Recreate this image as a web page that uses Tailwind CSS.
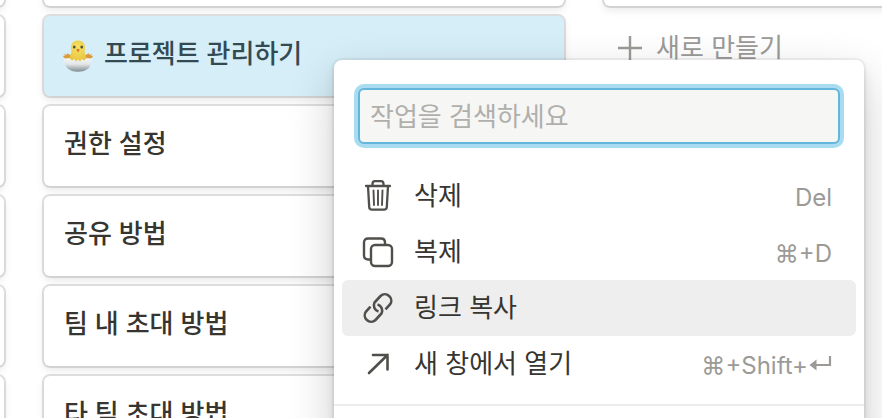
<!DOCTYPE html>
<html lang="ko">

<head>
    <meta charset="UTF-8">
    <meta name="viewport" content="width=device-width, initial-scale=1">
    <title>프로젝트 관리하기</title>
    <script src="https://cdn.jsdelivr.net/npm/@tailwindcss/browser@4"></script>
</head>

<body class="relative h-screen overflow-hidden bg-white font-['Inter','Noto_Sans_CJK_KR',sans-serif] text-[26px] leading-10 text-[#37352f]">
    <!-- Board -->
    <main class="-mt-[74px] -ml-[516px] flex items-start gap-10">
        <!-- Column 1 -->
        <div class="flex w-[520px] shrink-0 flex-col gap-2.5">
            <article class="h-20 rounded-md bg-white shadow-[0_0_0_2px_rgba(15,15,15,0.12),0_4px_8px_rgba(15,15,15,0.1)]"></article>
            <article class="h-20 rounded-md bg-white shadow-[0_0_0_2px_rgba(15,15,15,0.12),0_4px_8px_rgba(15,15,15,0.1)]"></article>
            <article class="h-20 rounded-md bg-white shadow-[0_0_0_2px_rgba(15,15,15,0.12),0_4px_8px_rgba(15,15,15,0.1)]"></article>
            <article class="h-20 rounded-md bg-white shadow-[0_0_0_2px_rgba(15,15,15,0.12),0_4px_8px_rgba(15,15,15,0.1)]"></article>
            <article class="h-20 rounded-md bg-white shadow-[0_0_0_2px_rgba(15,15,15,0.12),0_4px_8px_rgba(15,15,15,0.1)]"></article>
            <article class="h-20 rounded-md bg-white shadow-[0_0_0_2px_rgba(15,15,15,0.12),0_4px_8px_rgba(15,15,15,0.1)]"></article>
        </div>

        <!-- Column 2 -->
        <div class="flex w-[520px] shrink-0 flex-col gap-2.5 font-medium">
            <article class="h-20 rounded-md bg-white shadow-[0_0_0_2px_rgba(15,15,15,0.12),0_4px_8px_rgba(15,15,15,0.1)]"></article>
            <article class="flex h-20 items-start gap-2.5 rounded-md bg-[#d6eef8] px-[18px] pt-[18px] text-[#344a53] shadow-[0_0_0_2px_rgba(15,15,15,0.12),0_4px_8px_rgba(15,15,15,0.1)]">
                <svg class="mt-1.5 h-8 w-8" viewBox="0 0 32 32" aria-hidden="true">
                    <defs>
                        <linearGradient id="shell" x1="0" y1="0" x2="0" y2="1">
                            <stop offset="0" stop-color="#f6f7f6" />
                            <stop offset="0.45" stop-color="#e2e6e7" />
                            <stop offset="1" stop-color="#7f8a90" />
                        </linearGradient>
                        <radialGradient id="chick" cx="0.5" cy="0.35" r="0.7">
                            <stop offset="0" stop-color="#f7e264" />
                            <stop offset="1" stop-color="#e6c23e" />
                        </radialGradient>
                    </defs>
                    <path d="M10 20C6 20.500 2 19 .8 15.800L3 16 2 14 4.500 15 5 13.200C7 14.500 9 15 11 15Z" fill="#dc9b3a" />
                    <path d="M22 20C26 20.500 30 19 31.200 15.800L29 16 30 14 27.500 15 27 13.200C25 14.500 23 15 21 15Z" fill="#dc9b3a" />
                    <path d="M2 19C4 18.200 6 18.200 8 18L24 18C26 18.200 28 18.200 30 19C30 27 25 31.800 16 31.800S2 27 2 19Z" fill="url(#shell)" />
                    <path d="M9 7.500C9 3 12 .5 16 .5S23 3 23 7.500C23 10 22 11.500 23 13.500L24.500 18 22 20.500 20 19 18 21.500 16 19.500 14 21.500 12 19 10 20.500 7.500 18 9 13.500C10 11.500 9 10 9 7.500Z" fill="url(#chick)" />
                    <ellipse cx="12.300" cy="7" rx="1.300" ry="1.600" fill="#46503e" />
                    <ellipse cx="19.700" cy="7" rx="1.300" ry="1.600" fill="#46503e" />
                    <path d="M14.200 9.800 16 8.600 17.800 9.800 16 12.500Z" fill="#e0762c" />
                </svg>
                <span>프로젝트 관리하기</span>
            </article>
            <article class="h-20 rounded-md bg-white px-5 pt-[18px] shadow-[0_0_0_2px_rgba(15,15,15,0.12),0_4px_8px_rgba(15,15,15,0.1)]">권한 설정</article>
            <article class="h-20 rounded-md bg-white px-5 pt-[18px] shadow-[0_0_0_2px_rgba(15,15,15,0.12),0_4px_8px_rgba(15,15,15,0.1)]">공유 방법</article>
            <article class="h-20 rounded-md bg-white px-5 pt-[18px] shadow-[0_0_0_2px_rgba(15,15,15,0.12),0_4px_8px_rgba(15,15,15,0.1)]">팀 내 초대 방법</article>
            <article class="h-20 rounded-md bg-white px-5 pt-[18px] shadow-[0_0_0_2px_rgba(15,15,15,0.12),0_4px_8px_rgba(15,15,15,0.1)]">타 팀 초대 방법</article>
        </div>

        <!-- Column 3 -->
        <div class="flex w-[520px] shrink-0 flex-col gap-2.5">
            <article class="h-20 rounded-md bg-white shadow-[0_0_0_2px_rgba(15,15,15,0.12),0_4px_8px_rgba(15,15,15,0.1)]"></article>
            <button type="button" class="flex items-center gap-3.5 px-3.5 py-3 text-left text-[#9b9a97]">
                <svg class="h-6 w-6" viewBox="0 0 24 24" fill="none" stroke="currentColor" stroke-width="2.400" aria-hidden="true">
                    <path d="M12 0V24M0 12H24" />
                </svg>
                새로 만들기
            </button>
        </div>
    </main>

    <!-- Context menu -->
    <div class="absolute top-[60px] right-[18px] left-[334px] rounded-lg bg-white pt-7 shadow-[0_0_0_2px_rgba(15,15,15,0.05),0_6px_12px_rgba(15,15,15,0.1),0_18px_48px_rgba(15,15,15,0.2)]">
        <div class="px-6">
            <input type="text" aria-label="작업 검색" placeholder="작업을 검색하세요" class="block h-14 w-full rounded-md border-2 border-[#62b7da] bg-[#f6f6f5] px-2.5 ring-4 ring-[#a9dcf0] outline-none placeholder:text-[#b0afab]">
        </div>

        <ul class="px-2 pt-6 pb-3">
            <li>
                <button type="button" class="flex h-14 w-full items-center rounded-md pr-6 pl-5 text-left">
                    <svg class="mr-5 h-8 w-8" viewBox="0 0 32 32" fill="none" stroke="#504f4b" stroke-width="2.300" stroke-linecap="round" stroke-linejoin="round" aria-hidden="true">
                        <path d="M4 6H28M10.500 6V4C10.500 2.200 11.500 1.200 13 1.200H19C20.500 1.200 21.500 2.200 21.500 4V6M6 6 7.200 27C7.300 28.800 8.200 29.700 10 29.700H22C23.800 29.700 24.700 28.800 24.800 27L26 6" />
                        <path d="M11.500 10.500 12 25M16 10.500V25M20.500 10.500 20 25" stroke-width="1.900" />
                    </svg>
                    <span class="flex-1">삭제</span>
                    <kbd class="pt-1 font-['Inter','DejaVu_Sans',sans-serif] text-2xl text-[#9b9a97]">Del</kbd>
                </button>
            </li>
            <li>
                <button type="button" class="flex h-14 w-full items-center rounded-md pr-6 pl-5 text-left">
                    <svg class="mr-5 h-8 w-8" viewBox="0 0 32 32" fill="none" stroke="#504f4b" stroke-width="2.400" stroke-linejoin="round" aria-hidden="true">
                        <path d="M8.500 23.500H6C3.500 23.500 2 22 2 19.500V6.500C2 4 3.500 2.500 6 2.500H19C21.500 2.500 23 4 23 6.500V9" />
                        <rect x="9" y="9" width="21" height="21" rx="4" />
                    </svg>
                    <span class="flex-1">복제</span>
                    <kbd class="pt-1 font-['Inter','DejaVu_Sans',sans-serif] text-2xl text-[#9b9a97]">⌘+D</kbd>
                </button>
            </li>
            <li>
                <button type="button" class="flex h-14 w-full items-center rounded-md bg-[#eeeeee] pr-6 pl-5 text-left">
                    <svg class="mr-5 h-8 w-8" viewBox="0 0 32 32" fill="none" stroke="#504f4b" stroke-width="2.600" aria-hidden="true">
                        <path d="M16.500 19.500A6.400 6.400 0 0 1 12.500 10.500L18.500 4A6.400 6.400 0 0 1 28 12.500L23.500 17.300" />
                        <path d="M15.500 12.500A6.400 6.400 0 0 1 19.500 21.500L13.500 28A6.400 6.400 0 0 1 4 19.500L8.500 14.700" />
                    </svg>
                    <span class="flex-1">링크 복사</span>
                </button>
            </li>
            <li>
                <button type="button" class="flex h-14 w-full items-center rounded-md pr-6 pl-5 text-left">
                    <svg class="mr-5 h-8 w-8" viewBox="0 0 32 32" fill="none" stroke="#504f4b" stroke-width="2.600" stroke-linecap="round" stroke-linejoin="miter" aria-hidden="true">
                        <path d="M7 25 25.500 7M11 7H25.500V21.500" />
                    </svg>
                    <span class="flex-1">새 창에서 열기</span>
                    <kbd class="flex items-center pt-1 font-['Inter','DejaVu_Sans',sans-serif] text-2xl text-[#9b9a97]">⌘+Shift+<svg class="h-5 w-6" viewBox="0 0 24 20" fill="none" stroke="currentColor" stroke-width="2.200" role="img" aria-label="Enter">
                            <path d="M7 9H22V0" />
                            <path d="M1.500 9 8.500 3.500V14.500Z" fill="currentColor" stroke="none" />
                        </svg></kbd>
                </button>
            </li>
        </ul>
        <div class="h-10 border-t-2 border-[#ededec]"></div>
    </div>
</body>

</html>
